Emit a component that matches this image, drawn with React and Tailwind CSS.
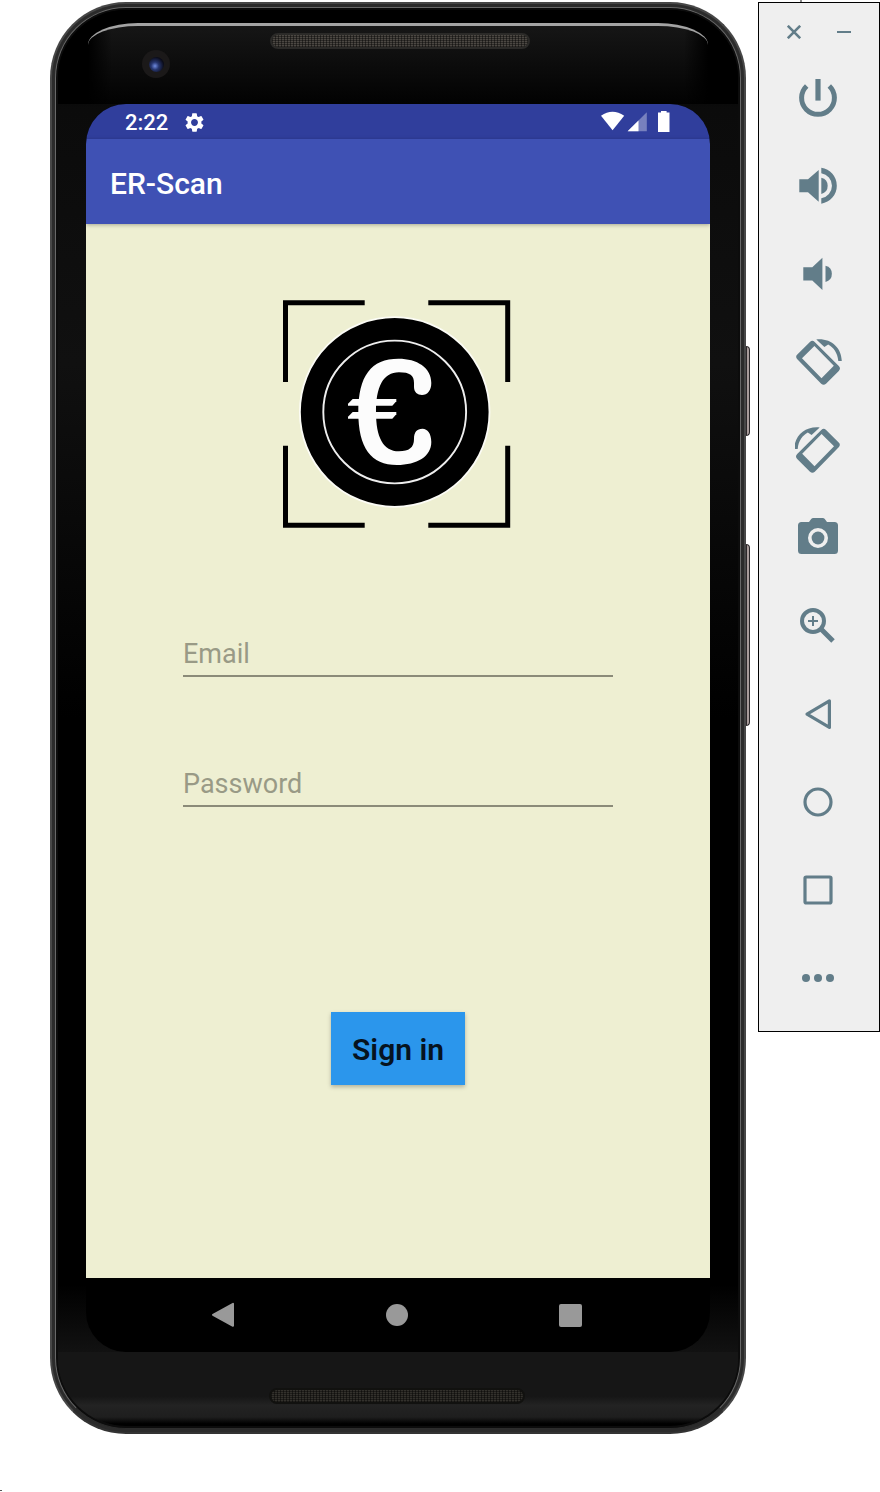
import React from "react";
import { MdSettings } from "react-icons/md";

function ToolIcon({ children }) {
  return (
    <svg viewBox="0 0 48 48" className="size-12 fill-[#627d89] stroke-[#627d89]" strokeWidth="0" aria-hidden="true">
      {children}
    </svg>
  );
}

const rotateShape = (
  <>
    <path
      fillRule="evenodd"
      d="M14.9 4Q17.3 1.6 19.7 4L43.8 28.1Q46.2 30.5 43.8 32.9L31 45.700Q28.600 48 26.200 45.700L2.300 21.200Q0 18.800 2.300 16.600ZM19.400 8L7 20.200L26.500 40.200L38.800 27.800Z"
    />
    <path d="M21.300 1.400C36 0 46.400 9.500 46.800 23H43.300C42.600 15 38.500 9.500 33.200 6.600L29.400 9Z" />
  </>
);

const tools = [
  {
    label: "Power",
    icon: (
      <>
        <path d="M11.700 12A16.400 16.400 0 1 0 34.300 12" fill="none" strokeWidth="5" />
        <path d="M20.400 5H25.600V26.600H20.400Z" />
      </>
    ),
  },
  {
    label: "Volume up",
    icon: (
      <>
        <path d="M4.300 17.300H13L23.700 8V39.700L13 30.300H4.300Z" />
        <path d="M26.300 15.700A8.400 8.400 0 0 1 26.300 32Z" />
        <path d="M26.300 5.700A18.200 18.200 0 0 1 26.300 41.700V36.200A12.600 12.600 0 0 0 26.300 11.300Z" />
      </>
    ),
  },
  {
    label: "Volume down",
    icon: (
      <>
        <path d="M8.300 17.300H17.300L27.400 7.700V40L17.300 30.500H8.300Z" />
        <path d="M30.500 15.700A8.400 8.400 0 0 1 30.500 32Z" />
      </>
    ),
  },
  { label: "Rotate left", icon: rotateShape },
  { label: "Rotate right", icon: <g transform="translate(46 0) scale(-1 1)">{rotateShape}</g> },
  {
    label: "Take screenshot",
    icon: (
      <>
        <path
          fillRule="evenodd"
          d="M6.500 8H14L16.200 5Q17 4 18.300 4H27.700Q29 4 29.800 5L32 8H39.500Q43 8 43 11.500V36.500Q43 40 39.500 40H6.500Q3 40 3 36.500V11.500Q3 8 6.500 8ZM23 14A10 10 0 1 0 23 34A10 10 0 1 0 23 14Z"
        />
        <circle cx="23" cy="24" r="6.400" />
      </>
    ),
  },
  {
    label: "Zoom",
    icon: (
      <>
        <circle cx="18" cy="19" r="11" fill="none" strokeWidth="4" />
        <path d="M13 19H23M18 14V24" fill="none" strokeWidth="2" />
        <path d="M26 27L38 39" fill="none" strokeWidth="5" />
      </>
    ),
  },
  {
    label: "Back",
    icon: <path d="M34.400 10.800L12 24.100L34.400 37.400Z" fill="none" strokeWidth="3.200" strokeLinejoin="round" />,
  },
  { label: "Home", icon: <circle cx="23" cy="24" r="13" fill="none" strokeWidth="3.200" /> },
  {
    label: "Overview",
    icon: <rect x="10" y="11" width="26" height="26" rx="1.200" fill="none" strokeWidth="3.200" />,
  },
  {
    label: "More",
    icon: (
      <>
        <circle cx="11" cy="24" r="4" />
        <circle cx="23" cy="24" r="4" />
        <circle cx="35" cy="24" r="4" />
      </>
    ),
  },
];

function Toolbar() {
  return (
    <div className="w-[122px] shrink-0">
      <div className="ml-[42px] h-[2px] w-[2px] bg-[#888]" />
      <aside className="border border-black bg-[#efefef] pb-[9px]">
        <div className="flex h-[51px] items-center justify-between px-[21px] pt-[7px]">
          <button aria-label="Close" className="flex size-7 items-center justify-center">
            <svg viewBox="0 0 14 14" className="size-[14px] stroke-[#627d89]" strokeWidth="2.600" aria-hidden="true">
              <path d="M0.800 0.800L13.200 13.200M13.200 0.800L0.800 13.200" />
            </svg>
          </button>
          <button aria-label="Minimize" className="flex size-7 items-center justify-center">
            <span className="h-[2px] w-[14px] bg-[#627d89]" />
          </button>
        </div>
        {tools.map((tool) => (
          <button key={tool.label} aria-label={tool.label} className="flex h-22 w-full items-center justify-center">
            <ToolIcon>{tool.icon}</ToolIcon>
          </button>
        ))}
      </aside>
    </div>
  );
}

function Grille({ className }) {
  return (
    <div
      className={
        "h-4 rounded-full border-2 bg-[repeating-linear-gradient(90deg,rgba(0,0,0,0.45)_0_1px,transparent_1px_3px),repeating-linear-gradient(0deg,rgba(0,0,0,0.4)_0_1px,transparent_1px_2px)] " +
        className
      }
    />
  );
}

function Logo() {
  return (
    <svg viewBox="0 0 228 228" className="size-[228px]" role="img" aria-label="ER-Scan logo">
      <path
        d="M81.700 2.800H2.500V82M145.300 2.800H224.700V82M2.500 145.700V225.200H81.700M145.300 225.200H224.700V145.700"
        fill="none"
        stroke="#000"
        strokeWidth="5"
      />
      <circle cx="111.700" cy="112" r="94.800" fill="#000" stroke="#fcfcf6" strokeWidth="1.800" />
      <circle cx="111.700" cy="112" r="71.400" fill="none" stroke="#eee" strokeWidth="1.900" />
      <g fill="#fcfcfc">
        <path d="M148.300 83C148.300 67.500 134 58.700 115.500 58.700C88 58.700 75.300 76 75.300 112C75.300 148 88 165 114 165C134 165 148.300 156.500 148.300 142C148.300 133.500 144.500 128.700 139.500 128.700C133.800 128.700 131 132 131 139C131 147.500 126 151.300 116 151.300C100 151.300 93 137 93 112C93 87 100 72.300 116 72.300C127 72.300 131 75.500 131 83V87C131 92.300 134.500 95 139 95C144.500 95 148.300 90.500 148.300 83Z" />
        <path d="M69.700 99H113.300V101.200L109.300 105.700H65V103.800Z" />
        <path d="M69.700 112H113.300V114.200L109.300 118.700H65V116.800Z" />
      </g>
    </svg>
  );
}

function Field({ id, label, type }) {
  return (
    <input
      id={id}
      type={type}
      aria-label={label}
      placeholder={label}
      className="block h-12 w-full border-b-2 border-[#8b8b79] bg-transparent pt-1 text-[27px] text-black outline-none placeholder:text-[#999a86] placeholder:opacity-100"
    />
  );
}

function StatusBar() {
  return (
    <div className="flex h-[35px] items-center bg-[#303e9c] pt-px pr-10 pl-[39px] text-white">
      <span className="text-[22px] font-medium">2:22</span>
      <MdSettings className="ml-[15px] size-[23px]" aria-hidden="true" />
      <svg viewBox="0 0 70 22" className="ml-auto h-[22px] w-[70px]" fill="#fff" aria-hidden="true">
        <path d="M1 4.800Q12.500 -3.500 24.200 4.800L12.600 19.300Z" />
        <path d="M46.800 1.200V20.200H27.600Z" opacity="0.350" />
        <path d="M38.500 9.400V20.200H27.600Z" />
        <path d="M61 0H66.600V1.600H69.500V21H58V1.600H61Z" />
      </svg>
    </div>
  );
}

function Screen() {
  return (
    <div className="overflow-hidden rounded-[40px] bg-black">
      <StatusBar />
      <header className="relative flex h-[85px] items-center bg-[#3f51b4] px-6 pt-1 shadow-[0_1px_4px_rgba(0,0,0,0.3)]">
        <h1 className="text-[30px] font-medium text-white">ER-Scan</h1>
      </header>
      <main className="bg-[#eeefd2] pt-[76px] pb-[193px]">
        <div className="flex justify-center pr-[2px]">
          <Logo />
        </div>
        <form className="mt-[101px] px-[97px]" onSubmit={(event) => event.preventDefault()}>
          <div className="flex flex-col gap-[82px]">
            <Field id="email" label="Email" type="email" />
            <Field id="password" label="Password" type="password" />
          </div>
          <div className="mt-[205px] flex justify-center">
            <button
              type="submit"
              className="h-[73px] w-[134px] bg-[#2b96ec] pt-px text-[30px] font-semibold text-[#06131f] shadow-[0_2px_4px_rgba(0,0,0,0.25)]"
            >
              Sign in
            </button>
          </div>
        </form>
      </main>
      <nav className="flex h-[74px] items-center justify-between pr-[116px] pl-[113px]">
        <button aria-label="Back" className="flex size-12 items-center justify-center">
          <svg viewBox="0 0 24 26" className="h-[26px] w-6" fill="#999" stroke="#999" strokeWidth="2" strokeLinejoin="round" aria-hidden="true">
            <path d="M2 12.800L22 1.800V23.800Z" />
          </svg>
        </button>
        <button aria-label="Home" className="flex size-12 items-center justify-center">
          <span className="size-[22px] rounded-full bg-[#999]" />
        </button>
        <button aria-label="Overview" className="flex size-12 items-center justify-center">
          <span className="size-[23px] rounded-[2px] bg-[#999]" />
        </button>
      </nav>
    </div>
  );
}

function Phone() {
  return (
    <div className="relative mt-[2px] min-w-0 flex-1">
      <div className="absolute top-[344px] -right-1 h-[90px] w-1 rounded-r-sm border border-[#2b2729] bg-[#a89c9b]" />
      <div className="absolute top-[542px] -right-1 h-[182px] w-1 rounded-r-sm border border-[#2b2729] bg-[#a89c9b]" />
      <div className="rounded-[76px] border-2 border-[#474747] border-b-[#333] bg-[#2b2b2b] p-[3px]">
        <div className="rounded-[71px] border border-[#686868] border-b-[#2c2c2c] bg-[#0c0c0c] p-[2px]">
          <div className="overflow-hidden rounded-[68px] bg-[linear-gradient(180deg,#000_0_3%,#0b0b0b_7%,#101010_25%,#000_50%,#000_90%,#161616_96%)]">
            <div className="bg-black px-[30px] pt-[13px]">
              <div className="h-[81px] rounded-t-[50px_22px] border-t-[3px] border-[#a3a3a3] bg-[linear-gradient(90deg,#000,transparent_24px,transparent_calc(100%-24px),#000),linear-gradient(180deg,#161616,#020202)]">
                <div className="flex justify-center pt-[7px] pl-1">
                  <Grille className="w-[260px] border-[#2b2a28] bg-[#4c4843]" />
                </div>
                <div className="mt-px ml-[54px] flex size-7 items-center justify-center rounded-full bg-[#1b1919]">
                  <div className="size-[15px] rounded-full bg-[radial-gradient(circle_at_40%_60%,#6f8be0_0,#27366f_30%,#0a0b18_70%)]" />
                </div>
              </div>
            </div>
            <div className="px-7">
              <Screen />
            </div>
            <div className="flex h-[74px] justify-center bg-[linear-gradient(180deg,#161616_0_60%,#232323_72%,#1e1e1e_88%,#000_97%)] pt-9 pr-[2px]">
              <Grille className="w-[256px] border-[#11110f] bg-[#33312c]" />
            </div>
          </div>
        </div>
      </div>
    </div>
  );
}

export default function App() {
  return (
    <div className="flex min-h-screen flex-col bg-white font-[Roboto,sans-serif]">
      <div className="flex flex-1 items-start gap-3 pl-[50px]">
        <Phone />
        <Toolbar />
      </div>
      <div className="mb-px h-px w-[2px] bg-[#555]" />
    </div>
  );
}
